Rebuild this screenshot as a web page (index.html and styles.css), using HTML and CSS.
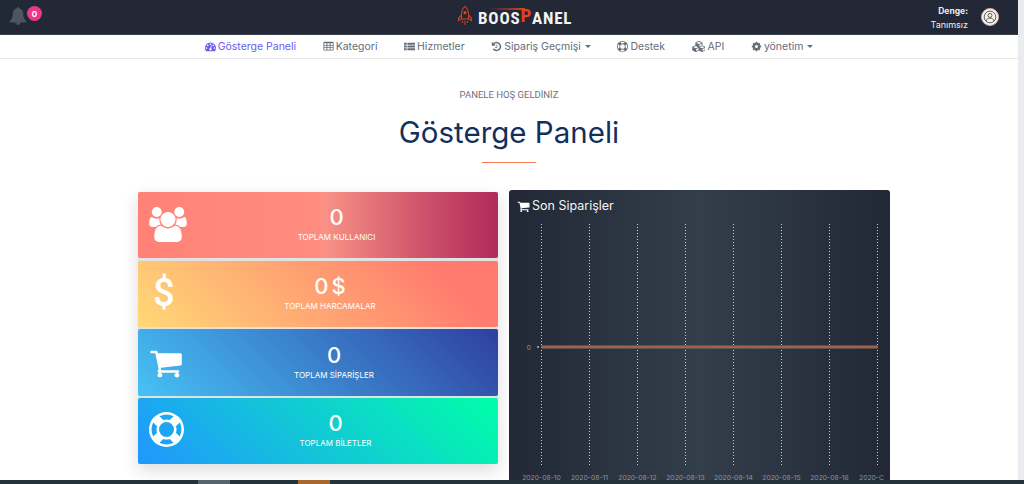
FILE: index.html
```html
<!DOCTYPE html>
<html lang="tr">
<head>
<meta charset="utf-8">
<title>Gösterge Paneli</title>
<link rel="stylesheet" href="styles.css">
</head>
<body>
<div class="page">
  <main class="main">
    <header class="topbar">
      <div class="notif">
        <svg class="bell" viewBox="0 0 1792 1792"><path d="M912 1696q0-16-16-16-59 0-101.5-42.5t-42.5-101.5q0-16-16-16t-16 16q0 73 51.5 124.5t124.5 51.5q16 0 16-16zm816-288q0 52-38 90t-90 38h-448q0 106-75 181t-181 75-181-75-75-181h-448q-52 0-90-38t-38-90q50-42 91-88t85-119.5 74.5-158.5 50-206 19.5-260q0-152 117-282.5t307-158.5q-8-19-8-39 0-40 28-68t68-28 68 28 28 68q0 20-8 39 190 28 307 158.5t117 282.5q0 139 19.5 260t50 206 74.5 158.5 85 119.5 91 88z"/></svg>
        <span class="badge">0</span>
      </div>
      <div class="logo">
        <svg class="rocket" viewBox="0 0 20 26" fill="none" stroke="#e0401f" stroke-width="1.3">
          <path d="M10 1.5C6.5 4.5 5.5 8.5 5.5 12.5V17.5H14.5V12.5C14.5 8.5 13.5 4.5 10 1.5Z"/>
          <path d="M5.5 12.5L2 16.5V19.5L5.5 17.5M14.5 12.5L18 16.5V19.5L14.5 17.5"/>
          <circle cx="10" cy="9.5" r="2" fill="#e0401f" stroke="none"/>
          <path d="M10 20V25M7 20V22.5M13 20V22.5"/>
        </svg>
        <span class="logo-text">BOOS<span class="logo-p">P</span>ANEL</span>
        <span class="swoosh"></span>
      </div>
      <div class="account">
        <div class="balance">
          <strong class="balance-label">Denge:</strong>
          <span class="balance-value">Tanımsız</span>
        </div>
        <span class="avatar">
          <svg viewBox="0 0 18 18" fill="none" stroke="#333" stroke-width="1"><circle cx="9" cy="9" r="7.5"/><circle cx="9" cy="7" r="2.6"/><path d="M4 14c.6-2.5 2.4-3.6 5-3.6s4.4 1.1 5 3.6"/></svg>
        </span>
      </div>
    </header>

    <nav class="nav">
      <a class="nav-link active"><svg class="ico" viewBox="0 0 1792 1792"><path d="M384 1152q0-53-37.5-90.5t-90.5-37.5-90.5 37.5-37.5 90.5 37.5 90.5 90.5 37.5 90.5-37.5 37.5-90.5zm192-448q0-53-37.5-90.5t-90.5-37.5-90.5 37.5-37.5 90.5 37.5 90.5 90.5 37.5 90.5-37.5 37.5-90.5zm428 481l101-382q6-26-7.5-48.5t-38.5-29.5-48 6.5-30 39.5l-101 382q-60 5-107 43.5t-63 98.5q-20 77 20 146t117 89 146-20 89-117q16-60-6-117t-72-91zm660-33q0-53-37.5-90.5t-90.5-37.5-90.5 37.5-37.5 90.5 37.5 90.5 90.5 37.5 90.5-37.5 37.5-90.5zm-640-640q0-53-37.5-90.5t-90.5-37.5-90.5 37.5-37.5 90.5 37.5 90.5 90.5 37.5 90.5-37.5 37.5-90.5zm448 192q0-53-37.5-90.5t-90.5-37.5-90.5 37.5-37.5 90.5 37.5 90.5 90.5 37.5 90.5-37.5 37.5-90.5zm320 448q0 261-141 483-19 29-54 29h-1402q-35 0-54-29-141-221-141-483 0-182 71-348t191-286 286-191 348-71 348 71 286 191 191 286 71 348z"/></svg>Gösterge Paneli</a>
      <a class="nav-link"><svg class="ico" viewBox="0 0 1792 1792"><path d="M576 1376v-192q0-14-9-23t-23-9h-320q-14 0-23 9t-9 23v192q0 14 9 23t23 9h320q14 0 23-9t9-23zm0-384v-192q0-14-9-23t-23-9h-320q-14 0-23 9t-9 23v192q0 14 9 23t23 9h320q14 0 23-9t9-23zm512 384v-192q0-14-9-23t-23-9h-320q-14 0-23 9t-9 23v192q0 14 9 23t23 9h320q14 0 23-9t9-23zm-512-768v-192q0-14-9-23t-23-9h-320q-14 0-23 9t-9 23v192q0 14 9 23t23 9h320q14 0 23-9t9-23zm512 384v-192q0-14-9-23t-23-9h-320q-14 0-23 9t-9 23v192q0 14 9 23t23 9h320q14 0 23-9t9-23zm512 384v-192q0-14-9-23t-23-9h-320q-14 0-23 9t-9 23v192q0 14 9 23t23 9h320q14 0 23-9t9-23zm-512-768v-192q0-14-9-23t-23-9h-320q-14 0-23 9t-9 23v192q0 14 9 23t23 9h320q14 0 23-9t9-23zm512 384v-192q0-14-9-23t-23-9h-320q-14 0-23 9t-9 23v192q0 14 9 23t23 9h320q14 0 23-9t9-23zm0-384v-192q0-14-9-23t-23-9h-320q-14 0-23 9t-9 23v192q0 14 9 23t23 9h320q14 0 23-9t9-23zm128-320v1088q0 66-47 113t-113 47h-1344q-66 0-113-47t-47-113v-1088q0-66 47-113t113-47h1344q66 0 113 47t47 113z"/></svg>Kategori</a>
      <a class="nav-link"><svg class="ico" viewBox="0 0 16 16"><path d="M0 2.5h4v3h-4zM5 2.5h11v3h-11zM0 6.5h4v3h-4zM5 6.5h11v3h-11zM0 10.500h4v3h-4zM5 10.500h11v3h-11z"/></svg>Hizmetler</a>
      <a class="nav-link"><svg class="ico" viewBox="0 0 1792 1792"><path d="M1664 896q0 156-61 298t-164 245-245 164-298 61q-172 0-327-72.500t-264-204.500q-7-10-6.500-22.500t8.500-20.500l137-138q10-9 25-9 16 2 23 12 73 95 179 147t225 52q104 0 198.500-40.500t163.500-109.500 109.500-163.500 40.500-198.500-40.500-198.500-109.500-163.500-163.500-109.500-198.500-40.500q-98 0-188 35.500t-160 101.500l137 138q31 30 14 69-17 40-59 40h-448q-26 0-45-19t-19-45v-448q0-42 40-59 39-17 69 14l130 129q107-101 244.500-156.500t284.500-55.500q156 0 298 61t245 164 164 245 61 298zm-640-288v448q0 14-9 23t-23 9h-320q-14 0-23-9t-9-23v-64q0-14 9-23t23-9h224v-352q0-14 9-23t23-9h64q14 0 23 9t9 23z"/></svg>Sipariş Geçmişi<span class="caret"></span></a>
      <a class="nav-link"><svg class="ico" viewBox="0 0 1792 1792"><path d="M896 0q182 0 348 71t286 191 191 286 71 348-71 348-191 286-286 191-348 71-348-71-286-191-191-286-71-348 71-348 191-286 286-191 348-71zm0 128q-190 0-361 90l194 194q82-28 167-28t167 28l194-194q-171-90-361-90zm-678 1129l194-194q-28-82-28-167t28-167l-194-194q-90 171-90 361t90 361zm678 407q190 0 361-90l-194-194q-82 28-167 28t-167-28l-194 194q171 90 361 90zm0-384q159 0 271.500-112.500t112.500-271.500-112.500-271.500-271.500-112.500-271.500 112.500-112.500 271.500 112.500 271.500 271.500 112.500zm484-217l194 194q90-171 90-361t-90-361l-194 194q28 82 28 167t-28 167z"/></svg>Destek</a>
      <a class="nav-link"><svg class="ico ico-wide" viewBox="0 0 2048 1792"><path d="M640 1632l384-192v-314l-384 164v342zm-64-454l404-173-404-173-404 173zm1088 454l384-192v-314l-384 164v342zm-64-454l404-173-404-173-404 173zm-448-293l384-165v-266l-384 164v267zm-64-379l441-189-441-189-441 189zm1088 518v416q0 36-19 67t-52 47l-448 224q-25 14-57 14t-57-14l-448-224q-4-2-7-4-2 2-7 4l-448 224q-25 14-57 14t-57-14l-448-224q-33-16-52-47t-19-67v-416q0-38 21.500-70t56.500-48l434-186v-400q0-38 21.500-70t56.500-48l448-192q23-10 50-10t50 10l448 192q35 16 56.500 48t21.500 70v400l434 186q36 16 57 48t21 70z"/></svg>API</a>
      <a class="nav-link"><svg class="ico" viewBox="0 0 1792 1792"><path d="M1152 896q0-106-75-181t-181-75-181 75-75 181 75 181 181 75 181-75 75-181zm512-109v222q0 12-8 23t-20 13l-185 28q-19 54-39 91 35 50 107 138 10 12 10 25t-9 23q-27 37-99 108t-94 71q-12 0-26-9l-138-108q-44 23-91 38-16 136-29 186-7 28-36 28h-222q-14 0-24.500-8.500t-11.500-21.500l-28-184q-49-16-90-37l-141 107q-10 9-25 9-14 0-25-11-126-114-165-168-7-10-7-23 0-12 8-23 15-21 51-66.500t54-70.500q-27-50-41-99l-183-27q-13-2-21-12.500t-8-23.500v-222q0-12 8-23t19-13l186-28q14-46 39-92-40-57-107-138-10-12-10-24 0-10 9-23 26-36 98.500-107.500t94.500-71.500q13 0 26 10l138 107q44-23 91-38 16-136 29-186 7-28 36-28h222q14 0 24.500 8.500t11.500 21.500l28 184q49 16 90 37l142-107q9-9 24-9 13 0 25 10 129 119 165 170 7 8 7 22 0 12-8 23-15 21-51 66.500t-54 70.500q26 50 41 98l183 28q13 2 21 12.500t8 23.500z"/></svg>yönetim<span class="caret"></span></a>
    </nav>

    <section class="heading">
      <p class="eyebrow">PANELE HOŞ GELDİNİZ</p>
      <h1 class="title">Gösterge Paneli</h1>
      <div class="rule"></div>
    </section>

    <section class="dash">
      <div class="stats">
        <article class="stat stat-red">
          <div class="stat-icon"><svg class="icon-users" viewBox="0 0 1920 1792"><path d="M593 896q-162 5-265 128h-134q-82 0-138-40.500t-56-118.500q0-353 124-353 6 0 43.500 21t97.500 42.500 119 21.500q67 0 133-23-5 37-5 66 0 139 81 256zm1071 637q0 120-73 189.500t-194 69.500h-874q-121 0-194-69.500t-73-189.500q0-53 3.500-103.500t14-109 26.500-108.500 43-97.500 62-81 85.500-53.500 111.500-20q10 0 43 21.500t73 48 107 48 135 21.500 135-21.500 107-48 73-48 43-21.500q61 0 111.500 20t85.500 53.500 62 81 43 97.500 26.500 108.500 14 109 3.500 103.500zm-1024-1277q0 106-75 181t-181 75-181-75-75-181 75-181 181-75 181 75 75 181zm704 384q0 159-112.500 271.500t-271.500 112.500-271.500-112.500-112.500-271.500 112.500-271.500 271.500-112.500 271.500 112.500 112.500 271.500zm576 225q0 78-56 118.500t-138 40.500h-134q-103-123-265-128 81-117 81-256 0-29-5-66 66 23 133 23 59 0 119-21.500t97.500-42.500 43.500-21q124 0 124 353zm-128-609q0 106-75 181t-181 75-181-75-75-181 75-181 181-75 181 75 75 181z"/></svg></div>
          <div class="stat-body body-users"><div class="stat-num">0</div><div class="stat-label">TOPLAM KULLANICI</div></div>
        </article>
        <article class="stat stat-orange">
          <div class="stat-icon"><span class="dollar">$</span></div>
          <div class="stat-body body-dollar"><div class="stat-num">0 $</div><div class="stat-label">TOPLAM HARCAMALAR</div></div>
        </article>
        <article class="stat stat-blue">
          <div class="stat-icon"><svg class="icon-cart" viewBox="0 0 1792 1792"><path d="M704 1536q0 52-38 90t-90 38-90-38-38-90 38-90 90-38 90 38 38 90zm896 0q0 52-38 90t-90 38-90-38-38-90 38-90 90-38 90 38 38 90zm128-1088v512q0 24-16.500 42.500t-40.500 21.500l-1044 122q13 60 13 70 0 16-24 64h920q26 0 45 19t19 45-19 45-45 19h-1024q-26 0-45-19t-19-45q0-11 8-31.500t16-36 21.500-40 15.500-29.500l-177-823h-204q-26 0-45-19t-19-45 19-45 45-19h256q16 0 28.500 6.500t19.500 15.500 13 24.500 8 26 5.500 29.500 4.500 26h1201q26 0 45 19t19 45z"/></svg></div>
          <div class="stat-body body-cart"><div class="stat-num">0</div><div class="stat-label">TOPLAM SİPARİŞLER</div></div>
        </article>
        <article class="stat stat-teal">
          <div class="stat-icon"><svg class="icon-ring" viewBox="0 0 1792 1792"><path d="M896 0q182 0 348 71t286 191 191 286 71 348-71 348-191 286-286 191-348 71-348-71-286-191-191-286-71-348 71-348 191-286 286-191 348-71zm0 128q-190 0-361 90l194 194q82-28 167-28t167 28l194-194q-171-90-361-90zm-678 1129l194-194q-28-82-28-167t28-167l-194-194q-90 171-90 361t90 361zm678 407q190 0 361-90l-194-194q-82 28-167 28t-167-28l-194 194q171 90 361 90zm0-384q159 0 271.500-112.500t112.500-271.500-112.500-271.500-271.500-112.500-271.500 112.500-112.500 271.500 112.500 271.500 271.500 112.500zm484-217l194 194q90-171 90-361t-90-361l-194 194q28 82 28 167t-28 167z"/></svg></div>
          <div class="stat-body body-ring"><div class="stat-num">0</div><div class="stat-label">TOPLAM BİLETLER</div></div>
        </article>
      </div>

      <div class="chart-card">
        <h2 class="chart-title"><svg class="chart-cart" viewBox="0 0 1792 1792"><path d="M704 1536q0 52-38 90t-90 38-90-38-38-90 38-90 90-38 90 38 38 90zm896 0q0 52-38 90t-90 38-90-38-38-90 38-90 90-38 90 38 38 90zm128-1088v512q0 24-16.500 42.500t-40.500 21.500l-1044 122q13 60 13 70 0 16-24 64h920q26 0 45 19t19 45-19 45-45 19h-1024q-26 0-45-19t-19-45q0-11 8-31.500t16-36 21.500-40 15.500-29.500l-177-823h-204q-26 0-45-19t-19-45 19-45 45-19h256q16 0 28.500 6.500t19.500 15.500 13 24.500 8 26 5.500 29.500 4.500 26h1201q26 0 45 19t19 45z"/></svg>Son Siparişler</h2>
        <svg class="chart" viewBox="0 0 381 270" width="381" height="270">
          <g class="grid">
            <line x1="32.500" y1="10" x2="32.500" y2="252"/>
            <line x1="80.500" y1="10" x2="80.500" y2="252"/>
            <line x1="128.500" y1="10" x2="128.500" y2="252"/>
            <line x1="176.500" y1="10" x2="176.500" y2="252"/>
            <line x1="224.500" y1="10" x2="224.500" y2="252"/>
            <line x1="272.500" y1="10" x2="272.500" y2="252"/>
            <line x1="320.500" y1="10" x2="320.500" y2="252"/>
            <line x1="368.500" y1="10" x2="368.500" y2="252"/>
          </g>
          <line class="tick" x1="28" y1="133" x2="30" y2="133"/>
          <line class="series-edge" x1="32" y1="133" x2="369" y2="133"/>
          <line class="series" x1="32" y1="133" x2="369" y2="133"/>
          <text class="axis" x="22" y="135.500" text-anchor="end">0</text>
          <text class="axis" x="32.500" y="265.500" text-anchor="middle">2020-08-10</text>
          <text class="axis" x="80.500" y="265.500" text-anchor="middle">2020-08-11</text>
          <text class="axis" x="128.500" y="265.500" text-anchor="middle">2020-08-12</text>
          <text class="axis" x="176.500" y="265.500" text-anchor="middle">2020-08-13</text>
          <text class="axis" x="224.500" y="265.500" text-anchor="middle">2020-08-14</text>
          <text class="axis" x="272.500" y="265.500" text-anchor="middle">2020-08-15</text>
          <text class="axis" x="320.500" y="265.500" text-anchor="middle">2020-08-16</text>
          <text class="axis" x="350" y="265.500">2020-C</text>
        </svg>
      </div>
    </section>
  </main>
  <div class="scrollbar"></div>
</div>
<div class="taskbar">
  <span class="task task-gray"></span>
  <span class="task task-orange"></span>
</div>
</body>
</html>
```
FILE: styles.css
```css
* { box-sizing: border-box; }
html, body { margin: 0; height: 100%; overflow: hidden; background: #fff; }
body { font-family: Inter, "Open Sans", "Liberation Sans", sans-serif; color: #333; }

.page { display: flex; height: 484px; overflow: hidden; }
.main { flex: 1; min-width: 0; display: flex; flex-direction: column; }
.scrollbar { width: 6px; background: #e9ebee; }

.topbar {
  position: relative;
  height: 35px;
  flex: none;
  background: #222835;
  border-bottom: 1px solid #3a3f49;
  display: flex;
  align-items: center;
  justify-content: space-between;
  padding: 0 19px 0 9px;
}
.notif { display: flex; align-items: flex-start; height: 100%; }
.bell { width: 18px; height: 18px; fill: #4d555f; margin-top: 7px; }
.badge {
  width: 15px; height: 15px; border-radius: 50%;
  background: #e8398a; color: #fff;
  font-size: 8px; font-weight: 700;
  display: flex; align-items: center; justify-content: center;
  margin-top: 6px;
}
.logo { position: absolute; left: 457px; top: 0; height: 34px; display: flex; align-items: center; }
.rocket { width: 16px; height: 23px; margin-right: 5px; margin-top: -3px; }
.logo-text {
  font-family: "Liberation Sans Narrow", "Roboto Condensed", "Roboto", sans-serif;
  font-weight: 700; font-size: 17px; color: #f2f2f2; letter-spacing: .8px;
  margin-top: 1px; white-space: nowrap;
}
.logo-p { color: #e8401c; font-size: 19px; line-height: 1; position: relative; top: -2px; }
.swoosh {
  position: absolute; left: 32px; top: 8px; width: 36px; height: 2px;
  background: linear-gradient(90deg, rgba(232,64,28,0), #e8401c);
}
.account { display: flex; align-items: center; gap: 13px; }
.balance { display: flex; flex-direction: column; align-items: flex-end; color: #eee; font-size: 9px; line-height: 13px; margin-top: 1px; }
.balance-label { font-weight: 700; font-size: 8.500px; }
.balance-value { font-weight: 400; }
.avatar {
  width: 18px; height: 18px; border-radius: 50%;
  background: #f7f3f1; border: 1px solid #d9a897;
  display: flex; align-items: center; justify-content: center;
}
.avatar svg { width: 14px; height: 14px; }

.nav {
  height: 24px; flex: none;
  display: flex; justify-content: center; align-items: center; gap: 26.600px;
  background: #fff; border-bottom: 1px solid #e8e8e8;
}
.nav-link { display: flex; align-items: center; font-size: 10.500px; color: #666c7a; white-space: nowrap; }
.nav-link.active { color: #6b5cf0; }
.ico { width: 11px; height: 11px; fill: currentColor; margin-right: 2px; flex: none; }
.ico-wide { width: 13px; margin-right: 3px; }
.caret {
  width: 0; height: 0; margin-left: 4px;
  border-left: 3px solid transparent; border-right: 3px solid transparent;
  border-top: 3px solid currentColor;
}

.heading { display: flex; flex-direction: column; align-items: center; padding-top: 30px; }
.eyebrow { margin: 0; font-size: 9.500px; line-height: 12px; color: #6f7280; font-family: Roboto, sans-serif; }
.title {
  margin: 13px 0 0; font-size: 29.500px; line-height: 36px; font-weight: 400;
  color: #122f5d; font-family: Inter, sans-serif;
}
.rule { width: 54px; height: 1px; background: #ff7a59; margin-top: 12px; }

.dash { display: flex; align-items: flex-start; gap: 11px; padding-left: 138px; margin-top: 27px; }
.stats {
  width: 360px; margin-top: 2px; flex: none;
  display: flex; flex-direction: column; gap: 2.300px;
  background: #e2e2e2;
  box-shadow: 0 6px 16px rgba(0,0,0,.14);
}
.stat {
  height: 66.400px; display: flex; align-items: center; color: #fff;
  border-radius: 2px;
}
.stat-red { background: linear-gradient(90deg, #ff8177 0%, #ff867a 21%, #ff8c7f 50%, #f99185 52%, #cf556c 78%, #b12a5b 100%); }
.stat-orange { background: linear-gradient(45deg, #ffd976 0%, #ff7a6f 85%); }
.stat-blue { background: linear-gradient(45deg, #46c2f6 0%, #2f3fa0 100%); }
.stat-teal { background: linear-gradient(45deg, #2196ff 0%, #00ffa8 100%); }
.stat-icon { width: 56px; flex: none; padding-left: 11px; display: flex; }
.stat-icon svg { fill: #fff; display: block; }
.icon-users { width: 38px; height: 35px; margin-top: -1px; }
.icon-cart { width: 34px; height: 34px; margin-top: 0; }
.icon-ring { width: 35px; height: 35px; margin-top: -3px; }
.dollar { font-family: Roboto, sans-serif; font-size: 38px; line-height: 40px; font-weight: 500; margin-left: 4px; margin-top: -2px; }
.stat-body { flex: 1; text-align: center; margin-top: -2px; }
.body-users { padding-right: 19px; }
.body-dollar { padding-right: 32px; }
.body-cart { padding-right: 24px; }
.body-ring { padding-right: 21px; }
.stat-num { font-size: 22px; line-height: 26px; font-weight: 500; word-spacing: -3px; }
.stat-label { font-size: 8px; line-height: 13px; font-weight: 400; margin-top: 1px; }

.chart-card {
  width: 381px; height: 300px; flex: none; border-radius: 3px 3px 0 0;
  background: linear-gradient(90deg, #222835 0%, #333e4b 50%, #222835 100%);
  color: #fff; overflow: hidden;
}
.chart-title {
  margin: 0; height: 24px; padding: 8px 0 0 8px;
  font-size: 12.500px; line-height: 16px; font-weight: 400;
  display: flex; align-items: center; color: #f5f5f5;
}
.chart-cart { width: 13px; height: 13px; fill: #fff; margin-right: 2px; }
.chart { display: block; }
.grid line { stroke: #c9ced4; stroke-width: 1; stroke-dasharray: 1 2; }
.tick { stroke: #fff; stroke-width: 1; }
.series-edge { stroke: #8d7058; stroke-width: 3; }
.series { stroke: #b3543f; stroke-width: 1.200; }
.axis { fill: #8b94a0; font-size: 6.800px; font-family: Inter, sans-serif; }

.taskbar {
  position: fixed; left: 0; right: 0; bottom: 0; height: 4px;
  background: #24323a; display: flex; padding-left: 198px; gap: 68px;
}
.task { width: 32px; height: 100%; }
.task-gray { background: #56646c; }
.task-orange { background: #a8672f; }
```
